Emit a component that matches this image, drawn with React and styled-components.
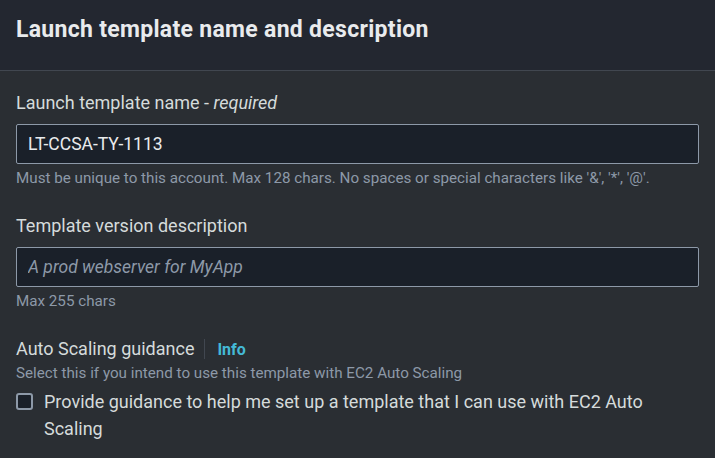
import styled, { createGlobalStyle } from "styled-components";

const GlobalStyle = createGlobalStyle`
  html, body {
    margin: 0;
    padding: 0;
    background: #2a2e33;
  }
  body {
    font-family: Roboto, "Liberation Sans", sans-serif;
    color: #d5dbdb;
  }
`;

const Panel = styled.section`
  width: 715px;
  min-height: 458px;
  background: #2a2e33;
`;

const Header = styled.header`
  box-sizing: border-box;
  height: 71px;
  padding: 14px 16px 0;
  background: #232730;
  border-bottom: 1px solid #414750;
`;

const Title = styled.h2`
  margin: 0;
  font-size: 23px;
  line-height: 32px;
  font-weight: 700;
  letter-spacing: 0.3px;
  color: #e9ebed;
`;

const Body = styled.div`
  display: flex;
  flex-direction: column;
  padding: 21px 16px 0;
`;

const Field = styled.div`
  display: flex;
  flex-direction: column;
  margin-bottom: ${(p) => p.$gap ?? 28}px;
`;

const LabelRow = styled.div`
  display: flex;
  align-items: center;
`;

const Label = styled.label`
  font-size: 18px;
  line-height: 22px;
  color: #d5dbdb;
  margin-bottom: ${(p) => p.$mb ?? 10}px;

  em {
    font-style: italic;
  }
`;

const Divider = styled.span`
  width: 1px;
  height: 20px;
  background: #414750;
  margin: 0 12px 0 10px;
`;

const InfoLink = styled.a`
  font-size: 16px;
  font-weight: 700;
  color: #44b9d6;
  text-decoration: none;
`;

const Input = styled.input`
  box-sizing: border-box;
  width: 100%;
  height: 40px;
  padding: 0 11px;
  background: #1a2029;
  border: 1px solid #8d99a8;
  border-radius: 2px;
  font-family: inherit;
  font-size: 17.5px;
  color: #e9ebed;
  outline: none;

  &::placeholder {
    color: #8d99a8;
    font-style: italic;
  }
`;

const Hint = styled.div`
  font-size: 15.2px;
  line-height: 18px;
  color: #8d99a8;
  margin-top: ${(p) => p.$mt ?? 5}px;
`;

const CheckRow = styled.label`
  display: flex;
  align-items: flex-start;
  gap: 11px;
  margin-top: 6px;
  font-size: 18px;
  line-height: 27px;
  color: #d5dbdb;
`;

const Box = styled.span`
  flex: none;
  box-sizing: border-box;
  width: 17px;
  height: 17px;
  margin-top: 5px;
  border: 2px solid #8d99a8;
  border-radius: 3px;
  background: #1a2029;
`;

export default function App() {
  return (
    <>
      <GlobalStyle />
      <Panel>
        <Header>
          <Title>Launch template name and description</Title>
        </Header>
        <Body>
          <Field>
            <Label>
              Launch template name - <em>required</em>
            </Label>
            <Input defaultValue="LT-CCSA-TY-1113" readOnly />
            <Hint>
              Must be unique to this account. Max 128 chars. No spaces or special
              characters like '&amp;', '*', '@'.
            </Hint>
          </Field>
          <Field>
            <Label>Template version description</Label>
            <Input placeholder="A prod webserver for MyApp" readOnly />
            <Hint>Max 255 chars</Hint>
          </Field>
          <Field $gap={0}>
            <LabelRow>
              <Label $mb={0}>Auto Scaling guidance</Label>
              <Divider />
              <InfoLink href="#">Info</InfoLink>
            </LabelRow>
            <Hint $mt={4}>
              Select this if you intend to use this template with EC2 Auto Scaling
            </Hint>
            <CheckRow>
              <Box />
              <span>
                Provide guidance to help me set up a template that I can use with
                EC2 Auto Scaling
              </span>
            </CheckRow>
          </Field>
        </Body>
      </Panel>
    </>
  );
}
